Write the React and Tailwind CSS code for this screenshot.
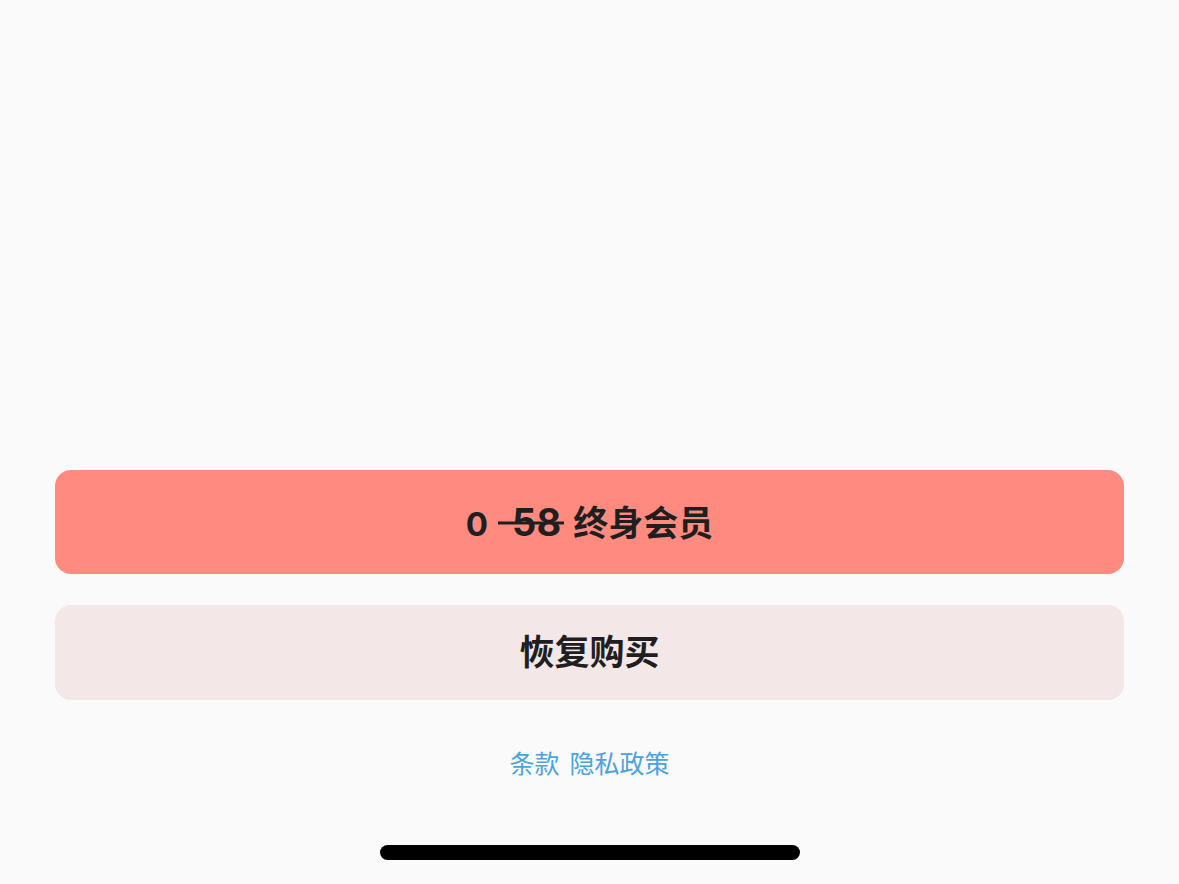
export default function App() {
  return (
    <div
      className="w-[1179px] h-[884px] bg-[#fafafa] flex flex-col px-[55px] overflow-hidden"
      style={{ fontFamily: '"Inter", "Noto Sans CJK SC", sans-serif' }}
    >
      <div className="h-[470px] shrink-0" />

      {/* Purchase */}
      <button className="h-[104px] w-full rounded-[16px] bg-[#ff8a80] flex items-center justify-center text-[#1f1f1f] font-bold">
        <span className="flex items-baseline">
          <span className="text-[33px] leading-none">0</span>
          <span className="relative ml-[24px] text-[38px] leading-none">
            58
            <span className="absolute left-[-14px] right-[-3px] top-[52%] h-[3px] -translate-y-1/2 bg-[#1f1f1f]" />
          </span>
          <span className="ml-[12px] text-[35px] leading-none">终身会员</span>
        </span>
      </button>

      {/* Restore */}
      <button className="mt-[31px] h-[95px] w-full rounded-[16px] bg-[#f3e7e7] flex items-center justify-center text-[#1f1f1f] font-bold text-[35px]">
        恢复购买
      </button>

      <div className="mt-[52px] flex justify-center gap-[10px] text-[#4aa3e0] text-[25px] leading-none">
        <span>条款</span>
        <span>隐私政策</span>
      </div>

      <div className="mt-[68px] flex justify-center">
        <div className="w-[420px] h-[15px] rounded-full bg-black" />
      </div>
    </div>
  );
}
